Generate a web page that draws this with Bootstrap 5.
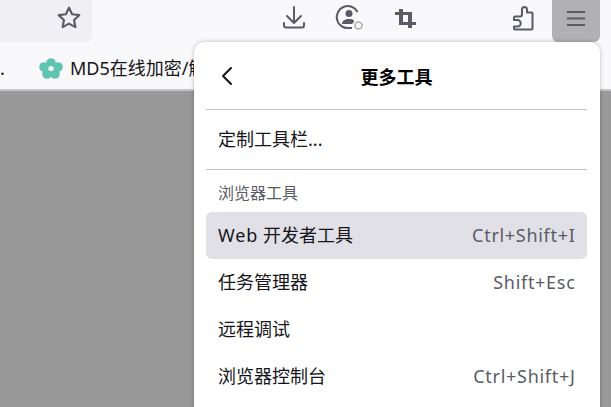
<!DOCTYPE html>
<html lang="zh"><head><meta charset="utf-8"><title>更多工具</title>
<link href="https://cdn.jsdelivr.net/npm/bootstrap@5.3.0/dist/css/bootstrap.min.css" rel="stylesheet">
<style>
html,body{width:611px;height:407px;overflow:hidden;margin:0;background:#999;font-family:"Noto Sans","Noto Sans CJK SC",sans-serif;color:#15141a}
.tbar{height:42px;background:#f9f9fb}
.urlbox{width:92px;height:42px;background:#f0f0f4;border-bottom-right-radius:6px;padding-right:10px;padding-bottom:6px}
.tbicon{position:absolute;top:3px;color:#5b5b66}
.tb-crop{left:395px;top:9px}
.tb-puzzle{left:511px;top:5px}
.tb-dl{left:282px}
.tb-prof{left:335px}
.menubtn{position:absolute;left:552px;top:0;width:48px;height:42px;background:#b1b1b3;border-radius:0 0 6px 6px;padding-bottom:6px}
.bmbar{height:49px;background:#f9f9fb;border-bottom:2px solid #c4c4c6;font-size:18px;white-space:nowrap;overflow:hidden;padding-top:5px}
.bmdot{width:39px}
.bmtext{margin-left:7px}
.panel{position:absolute;left:194px;top:42px;width:406px;height:380px;background:#fff;border-radius:10px 10px 0 0;padding:0 13px 0 12px;box-shadow:0 0 4px rgba(0,0,0,.25)}
.phead{height:67px;padding-top:4px}
.ptitle{font-size:18px;font-weight:700;color:#000}
.pback{position:absolute;left:26px;top:24px}
.psep{border-top:1px solid #c2c2c4;margin:0;opacity:1}
.pitem{height:47px;padding:0 11.500px 0 12px;font-size:18px;border-radius:6px;color:#15141a}
.pitem.on{background:#e0e0e6}
.pkey{color:#5b5b66;letter-spacing:.7px}
.wlat{letter-spacing:.9px}
.pcap{font-size:16px;color:#5b5b66;height:42px;padding:3px 12px 0}
.pcustom{height:59px}
</style></head><body>
<div class="tbar d-flex">
  <div class="urlbox d-flex align-items-center justify-content-end">
    <svg width="26" height="26" viewBox="0 0 24 24" fill="none" stroke="#5b5b66" stroke-width="2" stroke-linejoin="round"><path d="M12 2.500l2.900 6 6.600.9-4.800 4.500 1.200 6.500-5.900-3.200-5.900 3.200 1.200-6.500L2.500 9.400l6.600-.9z"/></svg>
  </div>
</div>
<svg class="tbicon tb-dl" width="24" height="28" viewBox="0 0 24 28" fill="none" stroke="#5b5b66" stroke-width="2" stroke-linecap="round" stroke-linejoin="round"><path d="M12 4v15M5 13l7 7 7-7M2 20v2.500a2 2 0 0 0 2 2h16a2 2 0 0 0 2-2V20"/></svg>
<svg class="tbicon tb-prof" width="28" height="28" viewBox="0 0 28 28" fill="none"><path d="M22.500 9A11 11 0 1 0 14 25h3" stroke="#5b5b66" stroke-width="2"/><circle cx="14" cy="10.500" r="3.500" fill="#5b5b66"/><path d="M7 21c0-3.500 3-5 7-5 2 0 4 .4 5 1.500v1.500l-2 2H7z" fill="#5b5b66"/><circle cx="23.500" cy="22.500" r="3.500" stroke="#b1b1b3" stroke-width="1.700"/></svg>
<svg class="tbicon tb-crop" width="21" height="19" viewBox="0 0 21 19" fill="#5b5b66"><path d="M4 0h4v3h9v10h4v3h-4v3h-4v-3H4V6H0V3h4zM8 6v7h5V6z"/></svg>
<svg class="tbicon tb-puzzle" width="24" height="26" viewBox="0 0 24 26" fill="none" stroke="#5b5b66" stroke-width="2" stroke-linejoin="round"><path d="M11 7.500V4.500a2.500 2.500 0 0 1 5 0v3h4.500a1 1 0 0 1 1 1v15a1 1 0 0 1-1 1H4a1 1 0 0 1-1-1V21.500h3.500a2.500 2.500 0 0 0 0-6.500H3v-2.500a1 1 0 0 1 1-1h5a2 2 0 0 0 2-2z"/></svg>
<div class="menubtn d-flex align-items-center justify-content-center">
  <svg width="18" height="16" viewBox="0 0 18 16" stroke="#5b5b66" stroke-width="2"><path d="M0 2h18M0 8.500h18M0 15h18"/></svg>
</div>
<div class="bmbar d-flex align-items-center">
  <span class="bmdot flex-shrink-0">.</span>
  <svg class="flex-shrink-0" width="24" height="21" viewBox="0 0 24 21" fill="#5fc4b2"><circle cx="12" cy="5" r="4.800"/><circle cx="5" cy="9" r="4.800"/><circle cx="19" cy="9" r="4.800"/><circle cx="8" cy="16" r="4.800"/><circle cx="16" cy="16" r="4.800"/><circle cx="12" cy="10.500" r="2.500" fill="#f9f9fb"/></svg>
  <span class="bmtext">MD5在线加密/解密</span>
</div>
<div class="panel">
  <div class="phead d-flex align-items-center justify-content-center ptitle">更多工具</div>
  <svg class="pback" width="14" height="20" viewBox="0 0 14 20" fill="none" stroke="#15141a" stroke-width="2" stroke-linecap="round" stroke-linejoin="round"><path d="M11 2L3 10l8 8"/></svg>
  <hr class="psep">
  <div class="pitem pcustom d-flex align-items-center">定制工具栏...</div>
  <hr class="psep">
  <div class="pcap d-flex align-items-center">浏览器工具</div>
  <div class="pitem on d-flex align-items-center justify-content-between"><span><span class="wlat">Web</span> 开发者工具</span><span class="pkey">Ctrl+Shift+I</span></div>
  <div class="pitem d-flex align-items-center justify-content-between"><span>任务管理器</span><span class="pkey">Shift+Esc</span></div>
  <div class="pitem d-flex align-items-center justify-content-between"><span>远程调试</span></div>
  <div class="pitem d-flex align-items-center justify-content-between"><span>浏览器控制台</span><span class="pkey">Ctrl+Shift+J</span></div>
</div>
<script src="https://cdn.jsdelivr.net/npm/bootstrap@5.3.0/dist/js/bootstrap.bundle.min.js"></script>
</body></html>
